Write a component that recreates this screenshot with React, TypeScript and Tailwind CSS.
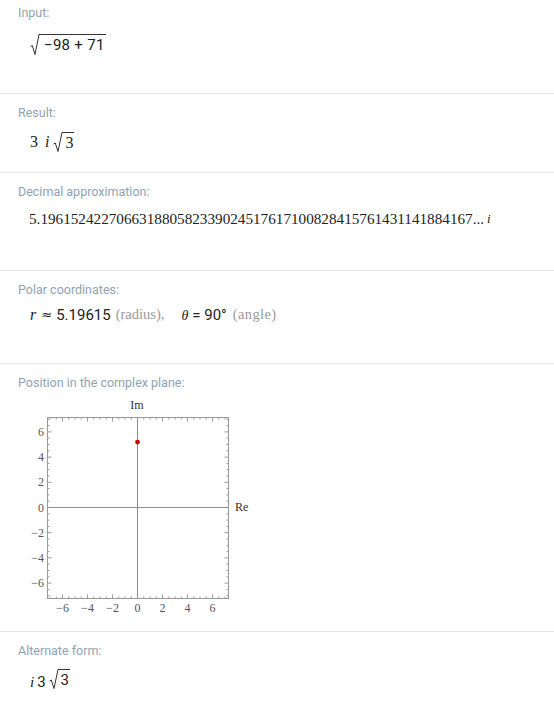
import type { ReactNode } from 'react';

const LABEL = "text-[12.5px] leading-[16px] text-[#8fa3b2] font-['Roboto',sans-serif]";

function Radical({ children, h = 20 }: { children: ReactNode; h?: number }) {
  return (
    <span className="inline-flex items-stretch">
      <svg width="10" height={h} viewBox={`0 0 10 ${h}`} className="block">
        <path
          d={`M0.5 ${h * 0.6} L2.3 ${h * 0.55} L5 ${h - 0.5} L9 0.5 L10 0.5`}
          fill="none"
          stroke="#333"
          strokeWidth="1"
        />
      </svg>
      <span className="border-t border-[#333] pl-[2px] pr-[1px] flex items-end leading-none">
        {children}
      </span>
    </span>
  );
}

function Section({ h, top = 'pt-[11px]', label, children }: { h: string; top?: string; label: string; children: ReactNode }) {
  return (
    <section className={`${h} ${top} border-b border-[#e6e6e6] pl-[18px]`}>
      <div className={LABEL}>{label}</div>
      {children}
    </section>
  );
}

function ComplexPlot() {
  const cx = 137.5;
  const cy = 507.5;
  const sx = 12.5;
  const sy = 12.6;
  const left = 47.5;
  const right = 228.5;
  const top = 417.5;
  const bottom = 598.5;
  const ticks: ReactNode[] = [];
  for (let i = -14; i <= 14; i++) {
    const v = i / 2;
    const major = i % 4 === 0;
    const len = major ? 4 : 2;
    const x = cx + v * sx;
    const y = cy - v * sy;
    if (x > left && x < right) {
      ticks.push(<line key={`b${i}`} x1={x} y1={bottom} x2={x} y2={bottom - len} />);
      ticks.push(<line key={`t${i}`} x1={x} y1={top} x2={x} y2={top + len} />);
    }
    if (y > top && y < bottom) {
      ticks.push(<line key={`l${i}`} x1={left} y1={y} x2={left + len} y2={y} />);
      ticks.push(<line key={`r${i}`} x1={right} y1={y} x2={right - len} y2={y} />);
    }
  }
  const labels = [-6, -4, -2, 0, 2, 4, 6];
  const fmt = (n: number) => (n < 0 ? `\u2212${-n}` : `${n}`);
  return (
    <svg width="260" height="230" viewBox="18 395 260 230" className="block mt-[4px] font-['Liberation_Serif',serif]">
      <g stroke="#9a9a9a" strokeWidth="1">
        <rect x={left} y={top} width={right - left} height={bottom - top} fill="none" />
        {ticks}
      </g>
      <g stroke="#8c8c8c" strokeWidth="1">
        <line x1={cx} y1={top} x2={cx} y2={bottom} />
        <line x1={left} y1={cy} x2={right} y2={cy} />
      </g>
      <circle cx={cx} cy={cy - 5.196 * sy} r="2.4" fill="#d40000" />
      <g fill="#555" fontSize="12">
        {labels.map((n) => (
          <text key={`x${n}`} x={cx + n * sx} y={612} textAnchor="middle">
            {fmt(n)}
          </text>
        ))}
        {labels.map((n) => (
          <text key={`y${n}`} x={44} y={cy - n * sy + 4} textAnchor="end">
            {fmt(n)}
          </text>
        ))}
        <text x={137} y={409} textAnchor="middle" fontSize="12" fill="#333">Im</text>
        <text x={235} y={511} fontSize="12" fill="#333">Re</text>
      </g>
    </svg>
  );
}

export default function App() {
  return (
    <div className="w-[554px] h-[708px] bg-white overflow-hidden text-[#222]">
      <Section h="h-[94px]" top="pt-[5px]" label="Input:">
        <div className="mt-[11px] ml-[12px] flex items-center h-[24px] font-['Roboto',sans-serif] text-[15px]">
          <Radical h={21}>
            <span className="pb-[2px] pl-[2px] tracking-[0.3px]">{'\u221298 + 71'}</span>
          </Radical>
        </div>
      </Section>

      <Section h="h-[79px]" label="Result:">
        <div className="mt-[9px] ml-[12px] flex items-center h-[24px] font-['Liberation_Serif',serif] text-[16px]">
          <span>3</span>
          <span className="italic ml-[7px] mr-[4px]">i</span>
          <Radical h={20}>
            <span className="pb-[1px]">3</span>
          </Radical>
        </div>
      </Section>

      <Section h="h-[98px]" label="Decimal approximation:">
        <div className="mt-[7px] ml-[11px] flex items-center h-[24px] font-['Liberation_Serif',serif] text-[15.2px] whitespace-nowrap">
          <span>5.196152422706631880582339024517617100828415761431141884167...</span>
          <span className="italic ml-[3px] text-[13px]">i</span>
        </div>
      </Section>

      <Section h="h-[93px]" label="Polar coordinates:">
        <div className="mt-[5px] ml-[12px] flex items-center h-[24px] text-[15px] whitespace-nowrap">
          <span className="italic font-['Liberation_Serif',serif] text-[16px]">r</span>
          <span className="ml-[5px] font-['DejaVu_Sans',sans-serif] text-[13px]">{'\u2248'}</span>
          <span className="ml-[4px] font-['Roboto',sans-serif]">5.19615</span>
          <span className="ml-[5px] text-[#9a9a9a] font-['Liberation_Serif',serif] text-[14.5px]">(radius),</span>
          <span className="ml-[17px] italic font-['Liberation_Serif',serif] text-[14px]">{'\u03b8'}</span>
          <span className="ml-[4px] font-['Roboto',sans-serif]">= 90°</span>
          <span className="ml-[6px] text-[#9a9a9a] font-['Liberation_Serif',serif] text-[14.5px] tracking-[0.4px]">(angle)</span>
        </div>
      </Section>

      <Section h="h-[268px]" label="Position in the complex plane:">
        <ComplexPlot />
      </Section>

      <section className="pt-[11px] pl-[18px]">
        <div className={LABEL}>Alternate form:</div>
        <div className="mt-[11px] ml-[12px] flex items-center h-[24px] font-['Roboto',sans-serif] text-[15px]">
          <span className="italic font-['Liberation_Serif',serif] text-[15px]">i</span>
          <span className="ml-[3px]">3</span>
          <span className="ml-[3px]">
            <Radical h={20}>
              <span className="pb-[1px]">3</span>
            </Radical>
          </span>
        </div>
      </section>
    </div>
  );
}
